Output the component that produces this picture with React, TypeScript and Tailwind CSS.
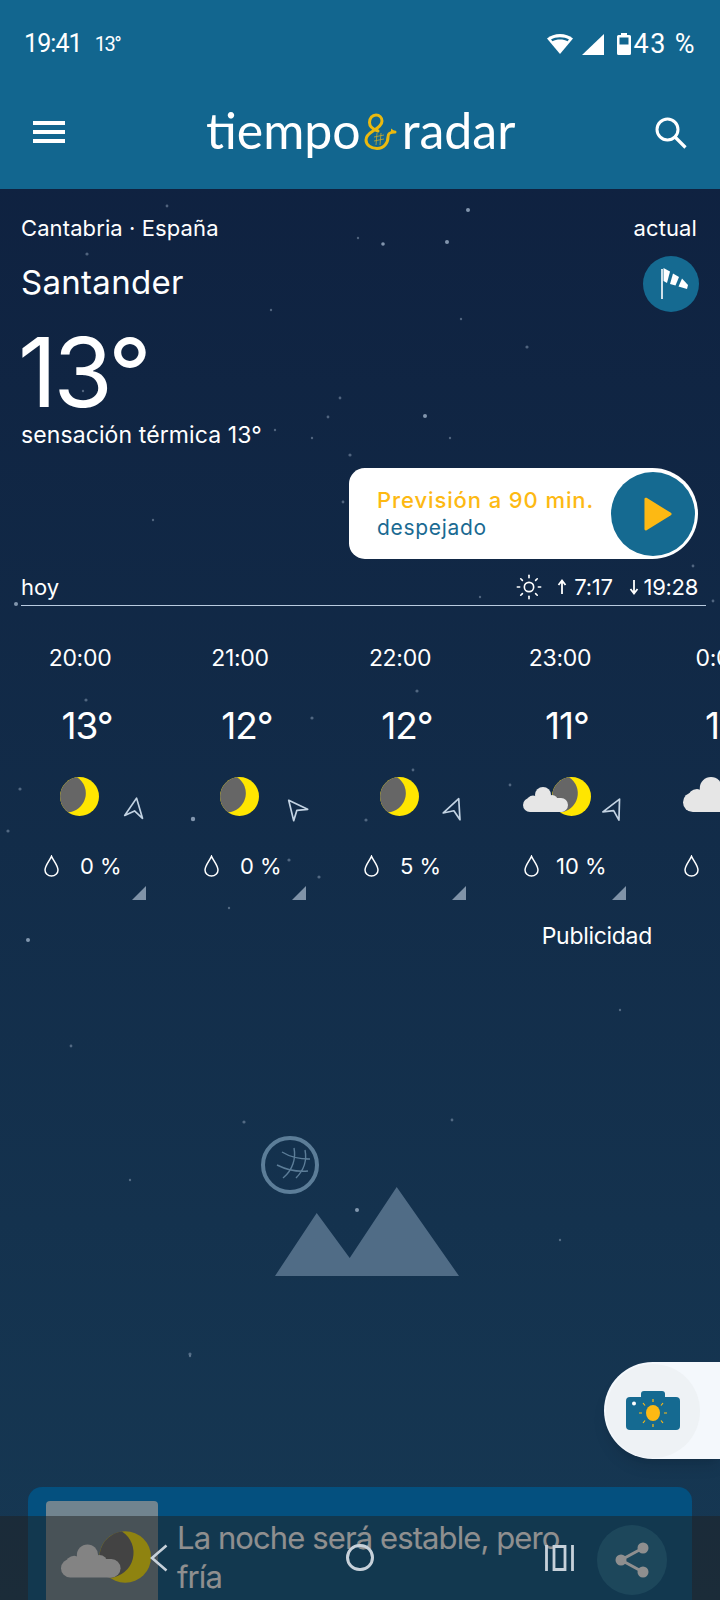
import { Sun } from "lucide-react";

const stars = [
  [468, 210, 2], [383, 244, 1.8], [447, 242, 2], [87, 254, 1.6], [527, 347, 1.6], [425, 416, 2], [340, 398, 1.4],
  [328, 417, 1.4], [461, 319, 1.2], [271, 310, 1.2], [358, 238, 1.2], [167, 206, 1.4], [83, 391, 1.2], [275, 430, 1.2],
  [312, 438, 1.2], [450, 438, 1.2], [350, 455, 1.6], [343, 502, 1.4], [693, 566, 1.4], [480, 597, 1.2], [713, 601, 1.4],
  [193, 819, 2.2], [20, 789, 1.6], [8, 831, 1.6], [86, 700, 1.6], [312, 718, 1.6], [289, 860, 1.6], [319, 877, 1.6],
  [417, 691, 1.6], [413, 770, 1.4], [366, 820, 1.6], [510, 785, 1.4], [16, 604, 2], [28, 940, 2], [71, 1046, 1.4],
  [153, 520, 1.2], [190, 1354, 1.6], [229, 908, 1.2], [357, 1210, 2], [244, 1122, 1.6], [452, 1120, 1.4],
  [190, 1356, 1.2], [470, 555, 1.2], [620, 1010, 1.2], [130, 1180, 1.2], [560, 1240, 1.2],
];

const hours = [
  { time: "20:00", temp: "13°", rain: "0 %", rot: 9, icon: "moon" },
  { time: "21:00", temp: "12°", rain: "0 %", rot: -39, icon: "moon" },
  { time: "22:00", temp: "12°", rain: "5 %", rot: 22, icon: "moon" },
  { time: "23:00", temp: "11°", rain: "10 %", rot: 27, icon: "cloudMoon" },
  { time: "0:00", temp: "11°", rain: "5 %", rot: 27, icon: "cloud" },
];

const MoonShape = () => (
  <>
    <circle cx="19.5" cy="19.5" r="19.5" fill="#ffe600" />
    <path d="M17 .2A19.5 19.5 0 0 0 8 35.2A19 19 0 0 0 17 .2Z" fill="#666666" />
  </>
);

const CloudShape = () => (
  <g fill="#e6e6e6">
    <circle cx="20" cy="8" r="8" />
    <circle cx="10" cy="15" r="6.5" />
    <circle cx="37" cy="19" r="6" />
    <circle cx="29" cy="14" r="6" />
    <rect x="0" y="11" width="45" height="14" rx="7" />
  </g>
);

const CloudMoon = ({ className }: { className: string }) => (
  <svg viewBox="0 0 68 39" className={className}>
    <g transform="translate(29 0)">
      <MoonShape />
    </g>
    <g transform="translate(0 10)">
      <CloudShape />
    </g>
  </svg>
);

const WindArrow = ({ rot }: { rot: number }) => (
  <svg viewBox="0 0 24 24" className="w-[24px] h-[24px] ml-[12px] mt-[19px] shrink-0 overflow-visible">
    <path
      d="M12 2 21 21 12 15 3 21Z"
      fill="none"
      stroke="#c3d3e3"
      strokeWidth="1.7"
      strokeLinejoin="round"
      transform={`rotate(${rot} 12 12)`}
    />
  </svg>
);

const Drop = () => (
  <svg viewBox="0 0 15 22" className="w-[15px] h-[22px] shrink-0">
    <path
      d="M7.5 1.2C6 5 1 10.5 1 15a6.5 6 0 0 0 13 0C14 10.5 9 5 7.5 1.2Z"
      fill="none"
      stroke="#ffffff"
      strokeWidth="1.5"
    />
  </svg>
);

const HourColumn = ({ hour }: { hour: (typeof hours)[number] }) => (
  <div className="w-[160px] shrink-0 flex flex-col text-white">
    <p className="mt-[2px] text-center text-[23px] leading-7 tracking-[-0.3px]">{hour.time}</p>
    <p className="mt-[32px] pl-[14px] text-center text-[37px] leading-[44px] tracking-[-1px]">{hour.temp}</p>
    <div className="mt-[29px] h-[40px] flex pl-[43px]">
      <div className="w-[68px] shrink-0">
        {hour.icon === "moon" && (
          <svg viewBox="0 0 39 39" className="ml-[17px] w-[39px] h-[39px]">
            <MoonShape />
          </svg>
        )}
        {hour.icon === "cloudMoon" && <CloudMoon className="w-[68px] h-[39px]" />}
        {hour.icon === "cloud" && (
          <svg viewBox="0 0 45 25" className="w-[63px] h-[35px]">
            <CloudShape />
          </svg>
        )}
      </div>
      {hour.icon !== "cloud" && <WindArrow rot={hour.rot} />}
    </div>
    <div className="mt-[35px] h-7 flex items-center pl-[44px]">
      <Drop />
      <span className={`text-[22px] leading-7 ${hour.rain === "10 %" ? "ml-[17px]" : "ml-[21px]"}`}>{hour.rain}</span>
    </div>
    <div className="mt-[6px] flex justify-end pr-[14px]">
      <svg viewBox="0 0 14 14" className="w-[14px] h-[14px]">
        <path d="M14 0V14H0Z" fill="#8093a8" />
      </svg>
    </div>
  </div>
);

export default function App() {
  return (
    <div
      className="relative w-[720px] h-[1600px] overflow-hidden flex flex-col bg-linear-to-b from-[#0e1f3e] to-[#163853] text-white"
      style={{ fontFamily: "Inter, 'Noto Sans', sans-serif" }}
    >
      <svg className="absolute left-0 top-0 w-[720px] h-[1600px] blur-[0.5px]" viewBox="0 0 720 1600">
        {stars.map(([x, y, r], i) => (
          <circle key={i} cx={x} cy={y} r={r} fill="#9fb2c8" opacity={r > 1.7 ? 0.8 : 0.45} />
        ))}
      </svg>

      <header className="relative h-[189px] shrink-0 bg-[#12668f]">
        <div className="h-[88px] flex items-center pl-[24px] pr-[24px]" style={{ fontFamily: "Roboto, sans-serif" }}>
          <span className="text-[25px] tracking-[-0.9px]">19:41</span>
          <span className="ml-[13px] text-[20px] tracking-[-1.5px]">13°</span>
          <div className="ml-auto flex items-center">
            <svg viewBox="0 0 26 20" className="w-[26px] h-[20px]">
              <path d="M13 20 0 4.5C3.5 1.6 8 0 13 0s9.500 1.600 13 4.500Z" fill="#ffffff" />
              <path d="M4 5.500C6.500 4 9.500 3.200 13 3.200s6.500.8 9 2.300l-1.500 1.800C18.500 6 16 5.500 13 5.500S7.500 6 5.500 7.300Z" fill="#12668f" />
            </svg>
            <svg viewBox="0 0 22 21" className="ml-[9px] w-[22px] h-[21px]">
              <path d="M22 0V21H0Z" fill="#ffffff" />
            </svg>
            <svg viewBox="0 0 14 22" className="ml-[13px] w-[14px] h-[22px]">
              <path d="M4 0h6v2h2.500A1.500 1.500 0 0 1 14 3.500v17a1.500 1.500 0 0 1-1.500 1.500h-11A1.500 1.500 0 0 1 0 20.500v-17A1.500 1.500 0 0 1 1.500 2H4Z" fill="#ffffff" />
              <rect x="2.500" y="4.500" width="9" height="7" fill="#12668f" />
            </svg>
            <span className="ml-[3px] text-[27px] tracking-[1.4px]">43 %</span>
          </div>
        </div>
        <div className="h-[84px] flex items-center pl-[33px] pr-[33px]">
          <svg viewBox="0 0 32 22" className="w-[32px] h-[22px] shrink-0 mt-[4px]">
            <path d="M0 0H32V4H0ZM0 9H32V13H0ZM0 18H32V22H0Z" fill="#ffffff" />
          </svg>
          <div className="ml-[141px] flex items-center text-[50px] leading-none" style={{ fontFamily: "Lato, sans-serif" }}>
            <span>tiempo</span>
            <svg viewBox="0 0 33 38" className="w-[33px] h-[38px] ml-[3px] mt-[4px]">
              <path
                d="M14 18C8 16 5.500 13 5.500 9.500 5.500 5 8.500 2 12 2 15.500 2 18 4.500 18 8 18 12 14 15 9 18 4 21 2 24 2 27 2 32 7 35.500 13 35.500 20 35.500 24 30 24 24 24 20 26 19 31 19"
                fill="none"
                stroke="#eab90f"
                strokeWidth="3"
                strokeLinecap="round"
              />
              <path d="M27 15.500 32 19 27 20Z" fill="#eab90f" />
              <path d="M10 24 20 22M10 28 20 26M13 20 12 32M17 20 16 32" stroke="#c9a92a" strokeWidth="0.8" />
            </svg>
            <span className="ml-[5px]">radar</span>
          </div>
          <svg viewBox="0 0 32 32" className="ml-auto mt-[5px] w-[32px] h-[32px] shrink-0">
            <circle cx="12.500" cy="12.500" r="10.500" fill="none" stroke="#ffffff" strokeWidth="3" />
            <path d="M20 20 30.500 30.500" stroke="#ffffff" strokeWidth="3.200" />
          </svg>
        </div>
      </header>

      <main className="relative flex-1 flex flex-col min-h-0">
        <div className="pl-[21px] pr-[23px] pt-[25px]">
          <div className="flex justify-between text-[22px] leading-7 tracking-[0.1px]">
            <span>Cantabria · España</span>
            <span>actual</span>
          </div>
          <div className="mt-[14px] h-[56px] flex items-center justify-between">
            <h1 className="text-[33px] leading-[40px] tracking-[0.3px] -mt-[5px]">Santander</h1>
            <div className="w-[56px] h-[56px] -mr-[2px] rounded-full bg-[#156a91]">
              <svg viewBox="0 0 56 56" className="w-[56px] h-[56px]">
                <path d="M19 13V43" stroke="#ffffff" strokeWidth="1.6" />
                <path d="M20.500 12 27 15.500 24 27 20.500 25Z" fill="#ffffff" />
                <path d="M30 17.500 36 21 32.500 29.500 27 28Z" fill="#ffffff" />
                <path d="M39 22.500 45 29 44 33 35.500 30.500Z" fill="#ffffff" />
              </svg>
            </div>
          </div>
          <p className="mt-3 h-[96px] text-[96px] leading-[96px] tracking-[-3.5px] -ml-[3px]">13°</p>
          <p className="mt-px text-[23px] leading-7 tracking-[0.1px]">sensación térmica 13°</p>
        </div>

        <div className="mt-[19px] ml-[349px] mr-[22px] h-[91px] rounded-l-[16px] rounded-r-[46px] bg-white flex items-center pl-[28px] pr-[3px]">
          <div className="flex-1 -mt-[2px]">
            <p className="text-[22px] leading-[30px] font-medium tracking-[0.9px] text-[#fdb913]">Previsión a 90 min.</p>
            <p className="text-[21px] leading-[26px] tracking-[0.7px] text-[#1a6a92]">despejado</p>
          </div>
          <div className="w-[84px] h-[84px] rounded-full bg-[#156a91] flex items-center justify-center">
            <svg viewBox="0 0 30 36" className="w-[28px] h-[34px] ml-[10px]">
              <path d="M2 2 28 18 2 34Z" fill="#fdb913" stroke="#fdb913" strokeWidth="3" strokeLinejoin="round" />
            </svg>
          </div>
        </div>

        <div className="mt-[14px] ml-[21px] mr-[14px] pb-1 border-b-[1.5px] border-[#b9cbe0] flex items-center justify-between text-[22px] leading-7">
          <span>hoy</span>
          <div className="flex items-center tracking-[-0.3px] mr-[8px]">
            <Sun className="w-[28px] h-[28px]" strokeWidth={1.4} />
            <svg viewBox="0 0 10 16" className="ml-[14px] w-[10px] h-[16px]">
              <path d="M5 15V2M1.500 6 5 1.500 8.500 6" fill="none" stroke="#ffffff" strokeWidth="1.8" />
            </svg>
            <span className="ml-[7px]">7:17</span>
            <svg viewBox="0 0 10 16" className="ml-[16px] w-[10px] h-[16px]">
              <path d="M5 1V14M1.500 10 5 14.500 8.500 10" fill="none" stroke="#ffffff" strokeWidth="1.800" />
            </svg>
            <span className="ml-[5px]">19:28</span>
          </div>
        </div>

        <div className="mt-[36px] flex overflow-hidden">
          {hours.map((hour) => (
            <HourColumn key={hour.time} hour={hour} />
          ))}
        </div>

        <p className="mt-[21px] pr-[68px] text-right text-[23px] leading-[30px] tracking-[-0.3px]">Publicidad</p>

        <svg viewBox="0 0 204 144" className="mt-[183px] ml-[258px] w-[204px] h-[144px] shrink-0">
          <circle cx="32" cy="31" r="27" fill="none" stroke="#5c7d98" strokeWidth="4" />
          <path
            d="M24 18C32 23 42 25 52 25M19 31C29 36 40 38 50 37M36 14C38 24 35 36 25 44M47 16C49 26 46 36 38 44"
            fill="none"
            stroke="#5c7d98"
            strokeWidth="1.4"
          />
          <path d="M17 142 58.700 79 91.700 124 138.700 53 201 142Z" fill="#506c86" />
        </svg>

        <div className="mt-auto mx-[28px] h-[113px] rounded-t-[14px] bg-[#04507f] flex pl-[18px] pt-[14px]">
          <div className="relative w-[112px] h-[99px] rounded-t-[4px] bg-[#71848f] shrink-0">
            <CloudMoon className="absolute left-[15px] top-[30px] w-[90px] h-[52px]" />
          </div>
          <p className="ml-[19px] w-[400px] text-[31px] leading-[39px] tracking-[-0.9px] mt-[17px]">
            La noche será estable, pero fría
          </p>
          <div className="ml-[20px] mt-[24px] w-[70px] h-[70px] rounded-full bg-[#1b6f97] flex items-center justify-center shrink-0">
            <svg viewBox="0 0 34 36" className="w-[34px] h-[36px]">
              <path d="M28 6 6 18 28 30" fill="none" stroke="#ffffff" strokeWidth="3" />
              <circle cx="28" cy="6" r="5.500" fill="#ffffff" />
              <circle cx="6" cy="18" r="5.500" fill="#ffffff" />
              <circle cx="28" cy="30" r="5.500" fill="#ffffff" />
            </svg>
          </div>
        </div>
      </main>

      <div className="absolute right-0 top-[1362px] w-[116px] h-[97px] rounded-l-[49px] bg-[#f4f8fc] shadow-lg flex items-center pl-[2px]">
        <div className="w-[94px] h-[94px] rounded-full bg-[#eef2f5] flex items-center justify-center">
          <svg viewBox="0 0 54 39" className="w-[54px] h-[39px]">
            <rect x="15" y="0" width="24" height="10" rx="3" fill="#156a91" />
            <rect x="0" y="6" width="54" height="33" rx="4" fill="#156a91" />
            <circle cx="8" cy="12.500" r="2" fill="#ffffff" />
            <ellipse cx="27" cy="22" rx="7" ry="8" fill="#fdb913" />
            <path
              d="M27 8V11M27 33V36M13 22H16M38 22H41M17 12 19 14.500M37 12 35 14.500M17 32 19 29.500M37 32 35 29.500"
              stroke="#fdb913"
              strokeWidth="1.2"
            />
          </svg>
        </div>
      </div>

      <div className="absolute left-0 right-0 bottom-0 h-[84px] bg-[#202020]/50 flex items-center pb-[1px]">
        <svg viewBox="0 0 18 28" className="ml-[150px] w-[18px] h-[28px] mt-[1px]">
          <path d="M16.500 1.500 2 14 16.500 26.500" fill="none" stroke="#c7d1da" strokeWidth="2.600" />
        </svg>
        <div className="ml-[178px] w-[28px] h-[27px] rounded-full border-[3px] border-[#c7d1da]" />
        <svg viewBox="0 0 29 26" className="ml-[171px] w-[29px] h-[26px]">
          <path d="M1.500 0V26M27.500 0V26M9 1.500H20V24.500H9Z" fill="none" stroke="#c7d1da" strokeWidth="2.800" />
        </svg>
      </div>
    </div>
  );
}
